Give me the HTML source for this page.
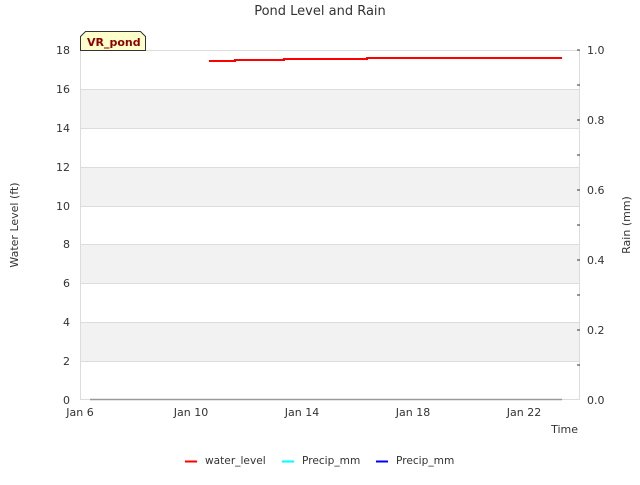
<!DOCTYPE html><html><head><style>body{margin:0;background:#fff}svg text{font-family:"DejaVu Sans","Liberation Sans",sans-serif;fill:#333}</style></head><body>
<svg width="640" height="480" viewBox="0 0 640 480" xmlns="http://www.w3.org/2000/svg">
<text x="320" y="15" font-size="13" text-anchor="middle">Pond Level and Rain</text>
<g fill="#f2f2f2"><rect x="80" y="322" width="500" height="39"/><rect x="80" y="244" width="500" height="39"/><rect x="80" y="167" width="500" height="39"/><rect x="80" y="89" width="500" height="39"/></g>
<g stroke="#dcdcdc" stroke-width="1"><line x1="80" y1="50.5" x2="580" y2="50.5"/><line x1="80" y1="89.5" x2="580" y2="89.5"/><line x1="80" y1="128.5" x2="580" y2="128.5"/><line x1="80" y1="167.5" x2="580" y2="167.5"/><line x1="80" y1="206.5" x2="580" y2="206.5"/><line x1="80" y1="244.5" x2="580" y2="244.5"/><line x1="80" y1="283.5" x2="580" y2="283.5"/><line x1="80" y1="322.5" x2="580" y2="322.5"/><line x1="80" y1="361.5" x2="580" y2="361.5"/><line x1="80.5" y1="50" x2="80.5" y2="400"/><line x1="579.5" y1="50" x2="579.5" y2="400"/><line x1="80" y1="399.5" x2="580" y2="399.5"/></g>
<g font-size="11" text-anchor="end"><text x="70" y="404">0</text><text x="70" y="365">2</text><text x="70" y="326">4</text><text x="70" y="287">6</text><text x="70" y="248">8</text><text x="70" y="210">10</text><text x="70" y="171">12</text><text x="70" y="132">14</text><text x="70" y="93">16</text><text x="70" y="54">18</text></g>
<g stroke="#333"><line x1="577" y1="50" x2="580" y2="50"/><line x1="577" y1="85" x2="580" y2="85"/><line x1="577" y1="120" x2="580" y2="120"/><line x1="577" y1="155" x2="580" y2="155"/><line x1="577" y1="190" x2="580" y2="190"/><line x1="577" y1="225" x2="580" y2="225"/><line x1="577" y1="260" x2="580" y2="260"/><line x1="577" y1="295" x2="580" y2="295"/><line x1="577" y1="330" x2="580" y2="330"/><line x1="577" y1="365" x2="580" y2="365"/></g>
<g font-size="11"><text x="587" y="54">1.0</text><text x="587" y="124">0.8</text><text x="587" y="194">0.6</text><text x="587" y="264">0.4</text><text x="587" y="334">0.2</text><text x="587" y="404">0.0</text></g>
<g font-size="11" text-anchor="middle"><text x="80" y="416">Jan 6</text><text x="191" y="416">Jan 10</text><text x="302" y="416">Jan 14</text><text x="413" y="416">Jan 18</text><text x="524" y="416">Jan 22</text></g>
<text x="578" y="433" font-size="11" text-anchor="end">Time</text>
<text transform="translate(18,225) rotate(-90)" font-size="11" text-anchor="middle">Water Level (ft)</text>
<text transform="translate(630,225) rotate(-90)" font-size="11" text-anchor="middle">Rain (mm)</text>
<line x1="90" y1="399.5" x2="562" y2="399.5" stroke="#999" stroke-width="1.5"/>
<path d="M209 61H235V60H284V59H367V58H562" fill="none" stroke="red" stroke-width="2"/>
<path d="M80.5 50.5V36.5L85.5 31.5H140.5L145.5 36.5V50.5Z" fill="#ffffcc" stroke="#333"/>
<text x="87" y="46" font-size="11" font-weight="bold" style="fill:#8b0000">VR_pond</text>
<g font-size="10.6"><line x1="185" y1="461.5" x2="197" y2="461.5" stroke="red" stroke-width="2"/><text x="205" y="464">water_level</text>
<line x1="282" y1="461.5" x2="294" y2="461.5" stroke="cyan" stroke-width="2"/><text x="302" y="464">Precip_mm</text>
<line x1="376" y1="461.5" x2="388" y2="461.5" stroke="blue" stroke-width="2"/><text x="396" y="464">Precip_mm</text></g>
</svg></body></html>
